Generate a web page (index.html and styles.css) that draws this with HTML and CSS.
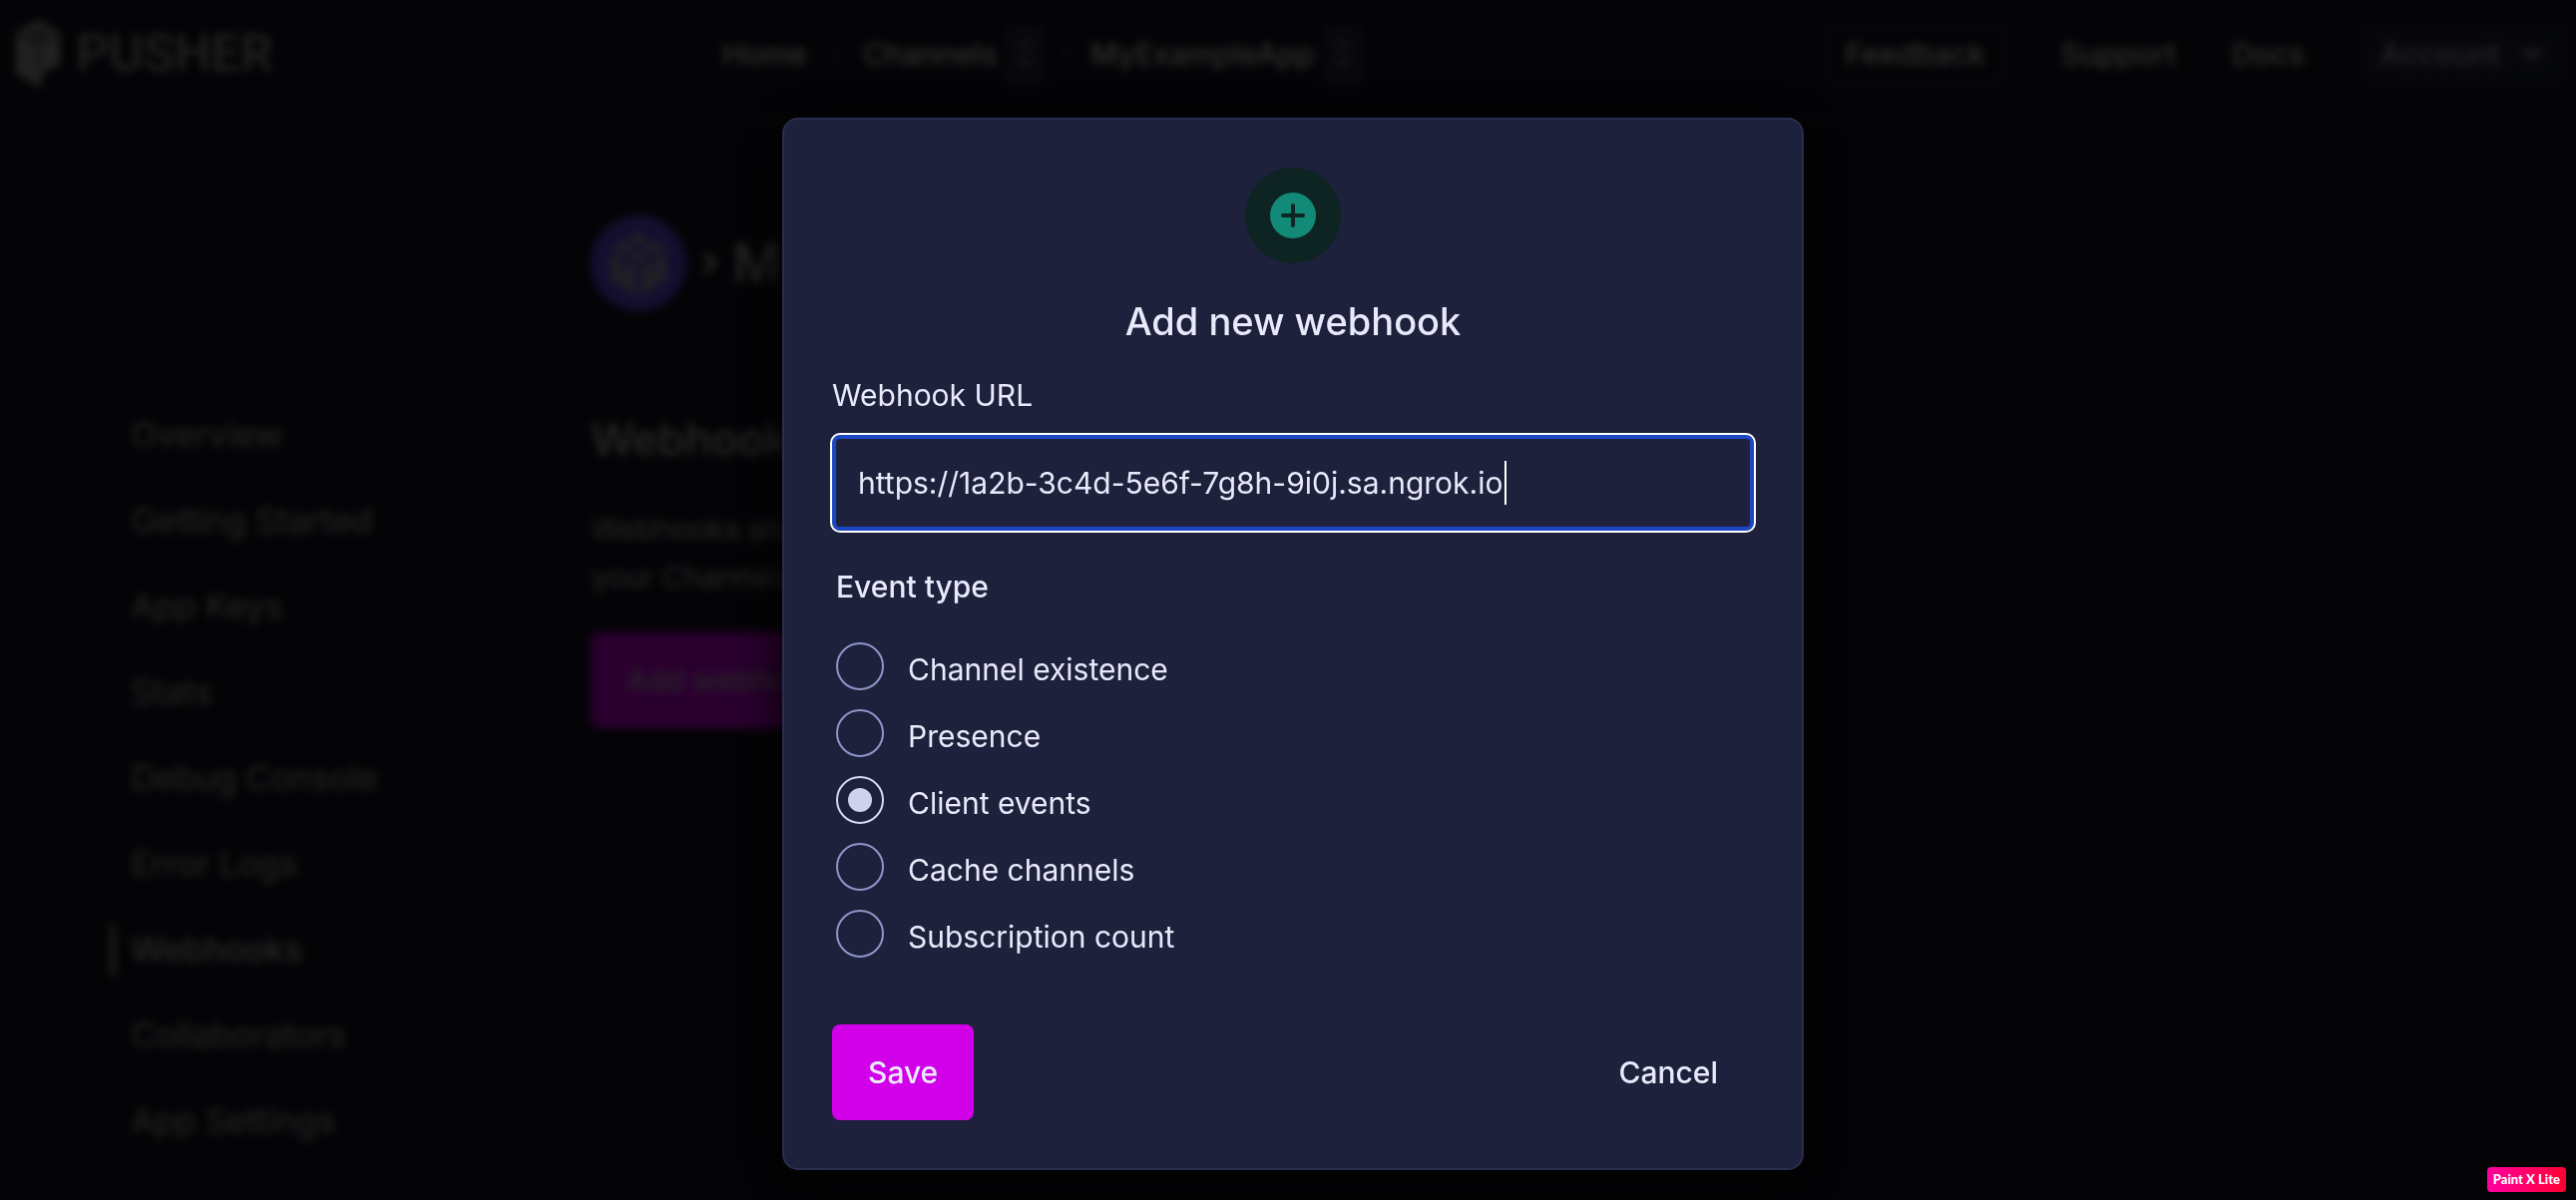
FILE: index.html
```html
<!DOCTYPE html>
<html lang="en">
<head>
<meta charset="utf-8">
<title>Webhooks - Pusher</title>
<link rel="stylesheet" href="styles.css">
</head>
<body>
<div class="page">
  <header class="topbar">
    <a class="brand" href="#">
      <svg class="brand-mark" viewBox="0 0 44 68" aria-hidden="true"><path d="M22 0 44 12V44L26 54V68L0 54V12Z" fill="currentColor"/><path d="M2 14 22 25V52M42 14 22 25M12 19 31 9M12 8 33 20" stroke="#141420" stroke-width="2" fill="none"/></svg>
      <span class="brand-name">PUSHER</span>
    </a>
    <nav class="crumbs" aria-label="Breadcrumb">
      <a href="#">Home</a>
      <svg class="crumb-sep" viewBox="0 0 12 20" aria-hidden="true"><path d="M2 2 10 10 2 18"/></svg>
      <a href="#">Channels</a>
      <button class="switcher" type="button" aria-label="Switch product"><svg viewBox="0 0 16 28" aria-hidden="true"><path d="M2 9 8 3 14 9M2 19 8 25 14 19"/></svg></button>
      <svg class="crumb-sep" viewBox="0 0 12 20" aria-hidden="true"><path d="M2 2 10 10 2 18"/></svg>
      <a href="#">MyExampleApp</a>
      <button class="switcher" type="button" aria-label="Switch app"><svg viewBox="0 0 16 28" aria-hidden="true"><path d="M2 9 8 3 14 9M2 19 8 25 14 19"/></svg></button>
    </nav>
    <div class="tools">
      <button class="feedback" type="button">Feedback</button>
      <a href="#">Support</a>
      <a href="#">Docs</a>
      <button class="account" type="button">Account <svg viewBox="0 0 20 14" aria-hidden="true"><path d="M2 2 10 11 18 2"/></svg></button>
    </div>
  </header>
  <div class="columns">
    <nav class="sidebar" aria-label="App">
      <a href="#">Overview</a>
      <a href="#">Getting Started</a>
      <a href="#">App Keys</a>
      <a href="#">Stats</a>
      <a href="#">Debug Console</a>
      <a href="#">Error Logs</a>
      <a class="current" href="#">Webhooks</a>
      <a href="#">Collaborators</a>
      <a href="#">App Settings</a>
    </nav>
    <main class="content">
      <div class="app-title">
        <svg class="app-badge" viewBox="0 0 96 96" aria-hidden="true"><circle cx="48" cy="48" r="48" fill="#6a48ec"/><path d="M48 18 76 33 48 48 20 33Z" fill="#a6a2b0"/><path d="M20 38 45 52V80L20 65ZM76 38 51 52V80L76 65Z" fill="#a6a2b0"/><path d="M34 25 62 41M62 25 34 41M32 46V62M64 46V62" stroke="#6a48ec" stroke-width="4"/></svg>
        <svg class="app-sep" viewBox="0 0 18 26" aria-hidden="true"><path d="M4 3 14 13 4 23"/></svg>
        <h1>My</h1>
      </div>
      <h2>Webhooks</h2>
      <p>Webhooks allow<br>your Channels</p>
      <button class="primary" type="button">Add webhook</button>
    </main>
  </div>
</div>

<div class="overlay">
  <form class="dialog" role="dialog" aria-labelledby="dialog-title">
    <svg class="dialog-icon" viewBox="0 0 96 96" aria-hidden="true"><circle cx="48" cy="48" r="48" fill="#0d2422"/><circle cx="48" cy="48" r="23" fill="#138977"/><path d="M38 48H58M48 38V58" stroke="#0d2422" stroke-width="4" stroke-linecap="round"/></svg>
    <h2 class="dialog-title" id="dialog-title">Add new webhook</h2>
    <label class="field-label" for="url">Webhook URL</label>
    <div class="field">
      <input class="url" id="url" type="text" value="https://1a2b-3c4d-5e6f-7g8h-9i0j.sa.ngrok.io" size="1">
      <span class="caret"></span>
    </div>
    <fieldset class="events">
      <legend>Event type</legend>
      <label><input type="radio" name="event"><span>Channel existence</span></label>
      <label><input type="radio" name="event"><span>Presence</span></label>
      <label><input type="radio" name="event" checked><span>Client events</span></label>
      <label><input type="radio" name="event"><span>Cache channels</span></label>
      <label><input type="radio" name="event"><span>Subscription count</span></label>
    </fieldset>
    <div class="actions">
      <button class="primary" type="button">Save</button>
      <button class="plain" type="button">Cancel</button>
    </div>
  </form>
</div>
<span class="watermark">Paint X Lite</span>
</body>
</html>
```
FILE: styles.css
```css
* { box-sizing: border-box; }
body {
  margin: 0;
  min-height: 100vh;
  background: #141420;
  color: #e9e9fb;
  font: 400 30px/48px Inter, sans-serif;
}
a { color: inherit; text-decoration: none; }
h1, h2, p { margin: 0; }
button { margin: 0; border: 0; font: inherit; color: inherit; background: none; }
svg { display: block; flex: none; }

.page { height: 100vh; overflow: hidden; color: #e0e0e2; }
.topbar {
  display: grid;
  grid-template-columns: 724px 1fr auto;
  align-items: center;
  height: 120px;
  padding-bottom: 10px;
  border-bottom: 2px solid #2c2c34;
  font-weight: 500;
}
.brand { display: flex; align-items: center; gap: 16px; padding-left: 16px; color: #a8a8ac; }
.brand-mark { width: 44px; height: 68px; }
.brand-name { font: 500 52px/68px "Liberation Sans Narrow", Roboto, sans-serif; }
.crumbs { display: flex; align-items: center; }
.crumb-sep { width: 12px; height: 20px; margin: 0 22px; fill: none; stroke: #3a4252; stroke-width: 3; }
.switcher { width: 40px; height: 60px; margin-left: 8px; padding: 0 12px; border-radius: 6px; background: #262a40; }
.switcher + .crumb-sep { margin: 0 20px 0 14px; }
.switcher svg { width: 16px; height: 28px; fill: none; stroke: #70748c; stroke-width: 4; }
.tools { display: flex; align-items: center; gap: 56px; padding-right: 10px; }
.feedback { height: 60px; padding: 0 16px; border: 4px solid #34343a; border-radius: 8px; }
.account { display: flex; align-items: center; gap: 22px; height: 64px; padding: 0 24px 0 20px; border-radius: 6px; background: #22243a; color: #b4b4ba; }
.account svg { width: 20px; height: 14px; fill: none; stroke: currentColor; stroke-width: 4; }

.columns { display: grid; grid-template-columns: 592px 1fr; }
.sidebar { display: flex; flex-direction: column; gap: 34px; padding: 290px 0 0 110px; color: #b8b8ba; font-size: 34px; }
.sidebar a { padding-left: 15px; border-left: 6px solid transparent; line-height: 52px; }
.sidebar .current { border-color: #8c8c8c; color: #c4c4c8; font-weight: 500; }
.content { padding-top: 96px; color: #b8b8ba; }
.content h2 { margin: 104px 0 42px; color: #c6c6c8; font-size: 44px; font-weight: 500; line-height: 48px; }
.app-title { display: flex; align-items: center; gap: 14px; }
.app-title h1 { font-size: 54px; font-weight: 500; line-height: 64px; }
.app-badge { width: 96px; height: 96px; }
.app-sep { width: 18px; height: 26px; fill: none; stroke: currentColor; stroke-width: 5; }
.content .primary { margin-top: 32px; }
.primary { height: 96px; padding: 0 36px; border-radius: 8px; background: #d100e8; font-weight: 500; }

.overlay {
  position: fixed;
  inset: 0;
  display: flex;
  align-items: flex-start;
  justify-content: center;
  padding: 118px 0 0 10px;
  background: rgba(0, 0, 0, .8);
  backdrop-filter: blur(4px);
}
.dialog {
  width: 1024px;
  padding: 48px;
  border: 2px solid #2a2d4e;
  border-radius: 16px;
  background: #1d213c;
  box-shadow: 0 8px 48px #000;
}
.dialog-icon { width: 96px; height: 96px; margin: 0 auto; }
.dialog-title { margin-top: 30px; font-size: 38px; font-weight: 500; line-height: 56px; text-align: center; }
.field-label { display: block; margin: 22px 0 16px; }
.field {
  position: relative;
  display: flex;
  align-items: center;
  height: 96px;
  padding: 0 22px;
  border: 4px solid #1b47c4;
  border-radius: 8px;
  outline: 2px solid #fff;
}
.url { flex: 1; padding: 0; border: 0; outline: 0; background: none; color: inherit; font: inherit; }
.caret { position: absolute; left: 670px; width: 2px; height: 44px; background: #fff; }
.events { display: flex; flex-direction: column; gap: 19px; margin: 32px 0 0; padding: 0 4px; border: 0; }
.events legend { padding: 0; margin-bottom: 32px; font-weight: 500; }
.events label { display: flex; align-items: center; gap: 24px; height: 48px; }
.events span { padding-top: 6px; }
.events input {
  appearance: none;
  display: grid;
  place-items: center;
  width: 48px;
  height: 48px;
  margin: 0;
  border: 2px solid #8f97c8;
  border-radius: 50%;
}
.events input:checked { border-color: #d5d9f2; }
.events input:checked::before { content: ""; width: 24px; height: 24px; border-radius: 50%; background: #ced2ea; }
.actions { display: flex; justify-content: space-between; margin-top: 67px; }
.plain { height: 96px; padding: 0 36px; font-weight: 500; }

.watermark {
  position: fixed;
  right: 10px;
  bottom: 8px;
  padding: 0 6px;
  border-radius: 4px;
  background: linear-gradient(90deg, #ff00a0, #ff0030);
  color: #fff;
  font: 900 13px/25px Lato, sans-serif;
}
```
